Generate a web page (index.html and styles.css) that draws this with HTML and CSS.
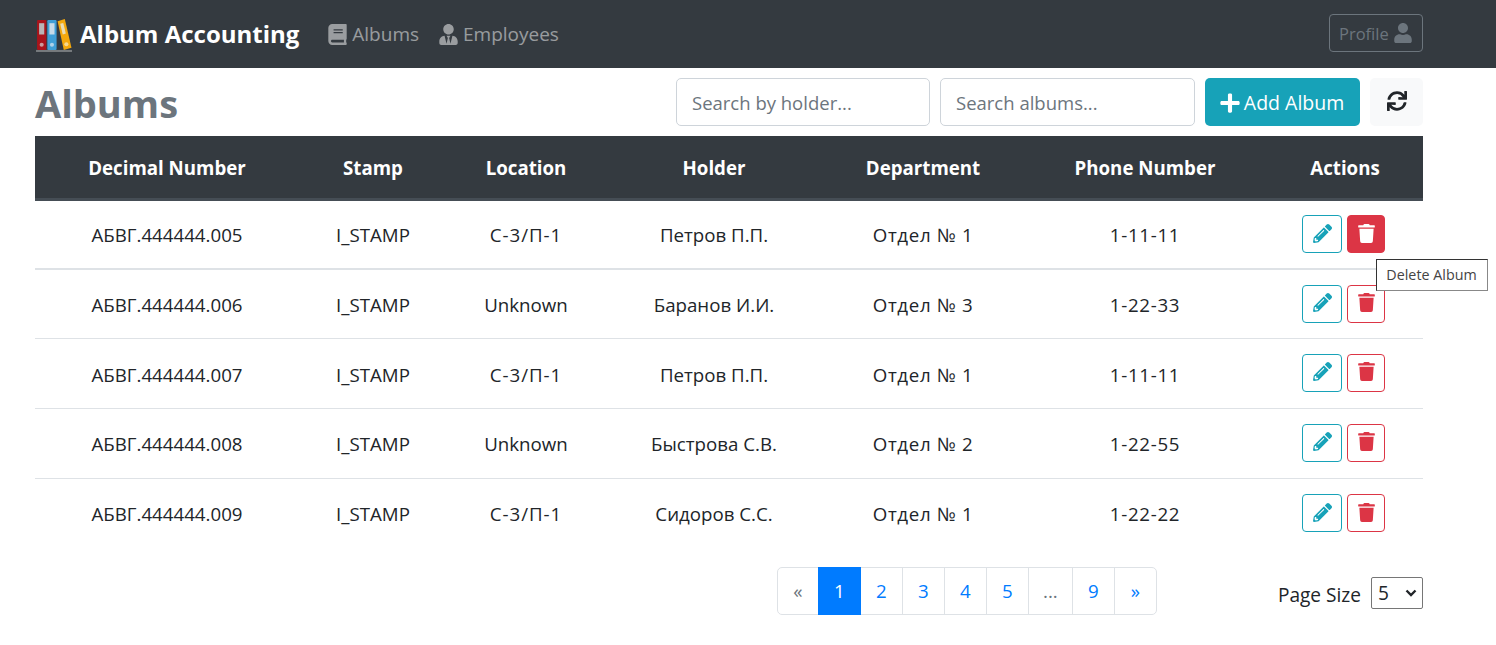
FILE: index.html
```html
<!DOCTYPE html>
<html lang="en">
<head>
    <meta charset="UTF-8" />
    <meta name="viewport" content="width=device-width, initial-scale=1" />
    <title>Album Accounting</title>
    <link rel="stylesheet" href="styles.css">
</head>
<body>
    <svg class="icon-defs" aria-hidden="true">
        <symbol id="i-book" viewBox="0 0 448 512"><path d="M448 360V24c0-13.3-10.7-24-24-24H96C43 0 0 43 0 96v320c0 53 43 96 96 96h328c13.3 0 24-10.7 24-24v-16c0-7.5-3.5-14.3-8.9-18.7-4.2-15.4-4.2-59.3 0-74.7 5.4-4.3 8.9-11.1 8.9-18.6zM128 134c0-3.3 2.7-6 6-6h212c3.3 0 6 2.7 6 6v20c0 3.3-2.7 6-6 6H134c-3.3 0-6-2.7-6-6v-20zm0 64c0-3.3 2.7-6 6-6h212c3.3 0 6 2.7 6 6v20c0 3.3-2.7 6-6 6H134c-3.3 0-6-2.7-6-6v-20zm253.4 250H96c-17.7 0-32-14.3-32-32 0-17.6 14.4-32 32-32h285.4c-1.9 17.1-1.9 46.9 0 64z"/></symbol>
        <symbol id="i-tie" viewBox="0 0 448 512"><path d="M224 256c70.7 0 128-57.3 128-128S294.7 0 224 0 96 57.3 96 128s57.3 128 128 128zm95.8 32.6L272 480l-32-136 32-56h-96l32 56-32 136-47.8-191.4C56.9 292 0 350.3 0 422.4V464c0 26.5 21.5 48 48 48h352c26.5 0 48-21.5 48-48v-41.6c0-72.1-56.9-130.4-128.2-133.8z"/></symbol>
        <symbol id="i-user" viewBox="0 0 448 512"><path d="M224 256c70.7 0 128-57.3 128-128S294.7 0 224 0 96 57.3 96 128s57.3 128 128 128zm89.6 32h-16.7c-22.2 10.2-46.9 16-72.9 16s-50.6-5.8-72.9-16h-16.7C60.2 288 0 348.2 0 422.4V464c0 26.5 21.5 48 48 48h352c26.5 0 48-21.5 48-48v-41.6c0-74.2-60.2-134.4-134.4-134.4z"/></symbol>
        <symbol id="i-plus" viewBox="0 0 448 512"><path d="M416 208H272V64c0-17.67-14.33-32-32-32h-32c-17.67 0-32 14.33-32 32v144H32c-17.67 0-32 14.33-32 32v32c0 17.67 14.33 32 32 32h144v144c0 17.67 14.33 32 32 32h32c17.67 0 32-14.33 32-32V304h144c17.67 0 32-14.33 32-32v-32c0-17.67-14.33-32-32-32z"/></symbol>
        <symbol id="i-sync" viewBox="0 0 512 512"><path d="M440.65 12.57l4 82.77A247.16 247.16 0 0 0 255.83 8C134.73 8 33.91 94.92 12.29 209.82A12 12 0 0 0 24.09 224h49.05a12 12 0 0 0 11.67-9.26 175.91 175.91 0 0 1 317-56.94l-101.46-4.86a12 12 0 0 0-12.57 12v47.41a12 12 0 0 0 12 12H500a12 12 0 0 0 12-12V12a12 12 0 0 0-12-12h-47.37a12 12 0 0 0-11.98 12.57zM255.83 432a175.61 175.61 0 0 1-146-77.8l101.8 4.87a12 12 0 0 0 12.57-12v-47.4a12 12 0 0 0-12-12H12a12 12 0 0 0-12 12V500a12 12 0 0 0 12 12h47.35a12 12 0 0 0 12-12.6l-4.15-82.57A247.17 247.17 0 0 0 255.83 504c121.11 0 221.93-86.92 243.55-201.82a12 12 0 0 0-11.8-14.18h-49.05a12 12 0 0 0-11.67 9.26A175.86 175.86 0 0 1 255.83 432z"/></symbol>
        <symbol id="i-pencil" viewBox="0 0 512 512"><path d="M497.9 142.1l-46.1 46.1c-4.7 4.7-12.3 4.7-17 0l-111-111c-4.7-4.7-4.7-12.3 0-17l46.1-46.1c18.7-18.7 49.1-18.7 67.9 0l60.1 60.1c18.8 18.7 18.8 49.1 0 67.9zM284.2 99.8L21.6 362.4.4 483.9c-2.9 16.4 11.4 30.6 27.8 27.8l121.5-21.3 262.6-262.6c4.7-4.7 4.7-12.3 0-17l-111-111c-4.8-4.7-12.4-4.7-17.1 0zM124.1 339.9c-5.5-5.5-5.5-14.3 0-19.8l154-154c5.5-5.5 14.3-5.5 19.8 0s5.5 14.3 0 19.8l-154 154c-5.5 5.5-14.3 5.5-19.8 0zM88 424h48v36.3l-64.5 11.3-31.1-31.1L51.7 376H88v48z"/></symbol>
        <symbol id="i-trash" viewBox="0 0 448 512"><path d="M432 32H312l-9.4-18.7A24 24 0 0 0 281.1 0H166.8a23.72 23.72 0 0 0-21.4 13.3L136 32H16A16 16 0 0 0 0 48v32a16 16 0 0 0 16 16h416a16 16 0 0 0 16-16V48a16 16 0 0 0-16-16zM53.2 467a48 48 0 0 0 47.9 45h245.8a48 48 0 0 0 47.9-45L416 128H32z"/></symbol>
    </svg>

    <nav class="navbar">
        <a class="brand" href="#">
            <svg class="brand-logo" viewBox="0 0 36 36" aria-hidden="true">
                <rect x="1" y="33" width="35" height="2" fill="#777b7e"/>
                <rect x="2" y="4" width="9" height="29" rx="1" fill="#a8141b"/>
                <rect x="4" y="7" width="5" height="11" fill="#b9b4b6"/>
                <circle cx="6.5" cy="28" r="2" fill="#c99a9c"/>
                <rect x="12" y="4" width="9" height="29" rx="1" fill="#3f9fd6"/>
                <rect x="14" y="7" width="5" height="11" fill="#c6dbe8"/>
                <circle cx="16.5" cy="28" r="2" fill="#aed2e8"/>
                <polygon points="22,5 29,3 35.5,31 28,33" fill="#f4a80d"/>
                <polygon points="24.5,7.5 27.5,6.7 30,17 27,18" fill="#eadcb4"/>
                <circle cx="30.5" cy="27.5" r="2" fill="#f7d88f"/>
            </svg>
            <span class="brand-text">Album Accounting</span>
        </a>
        <a class="nav-link" href="#"><svg class="icon"><use href="#i-book"/></svg> Albums</a>
        <a class="nav-link" href="#"><svg class="icon"><use href="#i-tie"/></svg> Employees</a>
        <button class="btn-profile" type="button" disabled>Profile <svg class="icon"><use href="#i-user"/></svg></button>
    </nav>

    <main class="container">
        <div class="toolbar">
            <h1>Albums</h1>
            <input class="search search-holder" type="text" placeholder="Search by holder..." />
            <input class="search search-albums" type="text" placeholder="Search albums..." />
            <button class="btn-add" type="button"><svg class="icon"><use href="#i-plus"/></svg> Add Album</button>
            <button class="btn-refresh" type="button"><svg class="icon"><use href="#i-sync"/></svg></button>
        </div>

        <table class="albums">
            <colgroup>
                <col class="c-number"><col class="c-stamp"><col class="c-location"><col class="c-holder"><col class="c-dept"><col class="c-phone"><col class="c-actions">
            </colgroup>
            <thead>
                <tr><th>Decimal Number</th><th>Stamp</th><th>Location</th><th>Holder</th><th>Department</th><th>Phone Number</th><th>Actions</th></tr>
            </thead>
            <tbody>
                <tr class="hovered">
                    <td>АБВГ.444444.005</td><td>I_STAMP</td><td class="room">С-3/П-1</td><td>Петров П.П.</td><td class="dept">Отдел № 1</td><td class="phone">1-11-11</td>
                    <td class="actions">
                        <button class="btn-icon edit" type="button"><svg class="icon"><use href="#i-pencil"/></svg></button>
                        <span class="delete-wrap">
                            <button class="btn-icon delete active" type="button"><svg class="icon"><use href="#i-trash"/></svg></button>
                            <span class="tooltip">Delete Album</span>
                        </span>
                    </td>
                </tr>
                <tr class="short nudged">
                    <td>АБВГ.444444.006</td><td>I_STAMP</td><td>Unknown</td><td>Баранов И.И.</td><td class="dept">Отдел № 3</td><td class="phone">1-22-33</td>
                    <td class="actions">
                        <button class="btn-icon edit" type="button"><svg class="icon"><use href="#i-pencil"/></svg></button>
                        <button class="btn-icon delete" type="button"><svg class="icon"><use href="#i-trash"/></svg></button>
                    </td>
                </tr>
                <tr class="nudged">
                    <td>АБВГ.444444.007</td><td>I_STAMP</td><td class="room">С-3/П-1</td><td>Петров П.П.</td><td class="dept">Отдел № 1</td><td class="phone">1-11-11</td>
                    <td class="actions">
                        <button class="btn-icon edit" type="button"><svg class="icon"><use href="#i-pencil"/></svg></button>
                        <button class="btn-icon delete" type="button"><svg class="icon"><use href="#i-trash"/></svg></button>
                    </td>
                </tr>
                <tr>
                    <td>АБВГ.444444.008</td><td>I_STAMP</td><td>Unknown</td><td>Быстрова С.В.</td><td class="dept">Отдел № 2</td><td class="phone">1-22-55</td>
                    <td class="actions">
                        <button class="btn-icon edit" type="button"><svg class="icon"><use href="#i-pencil"/></svg></button>
                        <button class="btn-icon delete" type="button"><svg class="icon"><use href="#i-trash"/></svg></button>
                    </td>
                </tr>
                <tr>
                    <td>АБВГ.444444.009</td><td>I_STAMP</td><td class="room">С-3/П-1</td><td>Сидоров С.С.</td><td class="dept">Отдел № 1</td><td class="phone">1-22-22</td>
                    <td class="actions">
                        <button class="btn-icon edit" type="button"><svg class="icon"><use href="#i-pencil"/></svg></button>
                        <button class="btn-icon delete" type="button"><svg class="icon"><use href="#i-trash"/></svg></button>
                    </td>
                </tr>
            </tbody>
        </table>

        <div class="table-footer">
            <ul class="pagination">
                <li class="page muted first">«</li>
                <li class="page current">1</li>
                <li class="page after-current">2</li>
                <li class="page">3</li>
                <li class="page">4</li>
                <li class="page">5</li>
                <li class="page muted dots">...</li>
                <li class="page">9</li>
                <li class="page">»</li>
            </ul>
            <label class="page-size"><span class="page-size-text">Page Size</span>
                <select>
                    <option>5</option>
                    <option>10</option>
                    <option>25</option>
                </select>
            </label>
        </div>
    </main>
</body>
</html>
```

FILE: styles.css
```css
* {
    box-sizing: border-box;
}
body {
    margin: 0;
    font-family: "Open Sans", "Noto Sans", sans-serif;
    font-size: 18.7px;
    color: #212529;
    background: #fff;
}
.icon-defs {
    display: none;
}
.icon {
    width: 1em;
    height: 1em;
    fill: currentColor;
    vertical-align: -0.125em;
}

/* top bar */
.navbar {
    display: flex;
    align-items: center;
    height: 68px;
    padding: 0 73px 0 35px;
    background: #343a40;
}
.brand {
    display: flex;
    align-items: center;
    gap: 8px;
    margin-right: 28px;
    color: #fff;
    font-size: 24px;
    font-weight: 700;
    text-decoration: none;
}
.brand-text {
    padding-bottom: 2px;
}
.brand-logo {
    width: 37px;
    height: 37px;
}
.nav-link {
    margin-right: 19px;
    font-size: 19px;
    color: rgba(255, 255, 255, 0.5);
    text-decoration: none;
}
.nav-link .icon {
    margin-right: -1px;
    font-size: 21px;
    vertical-align: -4px;
}
.btn-profile {
    margin: 0 0 2px auto;
    width: 94px;
    height: 38px;
    padding: 0;
    font: inherit;
    font-size: 16.5px;
    color: #6c757d;
    background: transparent;
    border: 1px solid #6c757d;
    border-radius: 4px;
}
.btn-profile .icon {
    font-size: 20px;
    vertical-align: -3px;
}

/* heading row */
.container {
    padding: 0 73px 0 35px;
}
.toolbar {
    display: flex;
    align-items: center;
    height: 68px;
    gap: 10px;
}
h1 {
    margin: 0 auto 0 0;
    padding-top: 2px;
    font-size: 38px;
    font-weight: 700;
    color: #6c757d;
}
.search {
    height: 48px;
    padding: 0 15px;
    font: inherit;
    font-size: 18.5px;
    color: #495057;
    background: #fff;
    border: 1px solid #ced4da;
    border-radius: 5px;
}
.search::placeholder {
    color: #6c757d;
}
.search-holder {
    width: 254px;
}
.search-albums {
    width: 255px;
}
.btn-add {
    width: 155px;
    height: 48px;
    padding: 0 2px 0 0;
    font: inherit;
    font-size: 19.5px;
    color: #fff;
    background: #17a2b8;
    border: 0;
    border-radius: 5px;
}
.btn-add .icon {
    margin-right: -2px;
    font-size: 22px;
    vertical-align: -4px;
}
.btn-refresh {
    width: 53px;
    height: 48px;
    font-size: 20px;
    color: #212529;
    background: #f8f9fa;
    border: 0;
    border-radius: 5px;
}

/* table */
.albums {
    width: 100%;
    table-layout: fixed;
    border-collapse: collapse;
}
.c-number { width: 264px; }
.c-stamp { width: 148px; }
.c-location { width: 158px; }
.c-holder { width: 218px; }
.c-dept { width: 200px; }
.c-phone { width: 244px; }
.albums th {
    height: 63px;
    padding: 2px 0 0;
    color: #fff;
    font-weight: 700;
    text-align: center;
    background: #343a40;
    border-bottom: 3px solid #454d55;
}
.albums td {
    height: 70px;
    padding: 0;
    text-align: center;
    border-bottom: 1px solid #dee2e6;
}
.albums tr.hovered td {
    border-bottom-width: 2px;
}
.albums tr.short td {
    height: 69px;
}
.albums tr.nudged td {
    padding-top: 2px;
}
.albums tbody tr:last-child td {
    border-bottom: 0;
}
.albums td.room {
    letter-spacing: 1px;
}
.albums td.dept {
    letter-spacing: 0.65px;
}
.albums td.phone {
    letter-spacing: 0.7px;
}
.albums td.actions,
.albums tr.nudged td.actions {
    padding: 0 4px 0 0;
    font-size: 0;
}
.btn-icon {
    width: 40px;
    height: 38px;
    margin-right: 5px;
    padding: 0 0 0 2px;
    font-size: 19px;
    background: #fff;
    border-radius: 4px;
    border: 1px solid;
}
.edit {
    color: #17a2b8;
    border-color: #17a2b8;
}
.delete {
    width: 38px;
    margin-right: 0;
    color: #dc3545;
    border-color: #dc3545;
}
.delete.active {
    color: #fff;
    background: #dc3545;
}
.delete-wrap {
    position: relative;
    display: inline-block;
}
.tooltip {
    position: absolute;
    top: 44px;
    left: 29px;
    width: 112px;
    height: 32px;
    font-size: 14.3px;
    line-height: 30px;
    color: #444;
    background: #fff;
    border: 1px solid #888;
    border-top-color: #333;
    border-left-color: #333;
    white-space: nowrap;
}

/* pager */
.table-footer {
    display: flex;
    align-items: center;
    justify-content: flex-end;
    margin-top: 19px;
}
.pagination {
    display: flex;
    margin: 0 121px 0 0;
    padding: 0;
    list-style: none;
    border: 1px solid #dee2e6;
    border-radius: 5px;
}
.page {
    width: 42px;
    height: 46px;
    line-height: 46px;
    text-align: center;
    color: #007bff;
    border-left: 1px solid #dee2e6;
}
.page.first {
    width: 40px;
    border-left: 0;
}
.page.current {
    width: 43px;
    height: 48px;
    margin: -1px 0;
    line-height: 48px;
    color: #fff;
    background: #007bff;
    border-left: 0;
}
.page.after-current {
    width: 41px;
    border-left: 0;
}
.page.dots {
    width: 44px;
}
.page.muted {
    color: #6c757d;
}
.page-size {
    display: flex;
    align-items: center;
    gap: 10px;
    margin-top: 4px;
    font-size: 19.1px;
}
.page-size-text {
    padding-top: 4px;
}
.page-size select {
    width: 52px;
    height: 32px;
    padding: 0 0 0 6px;
    font: inherit;
    color: #212529;
    background: #fff url("data:image/svg+xml,%3Csvg xmlns='http://www.w3.org/2000/svg' viewBox='0 0 12 8'%3E%3Cpath d='M1.5 1.5 6 6l4.5-4.5' fill='none' stroke='%23212529' stroke-width='2.4'/%3E%3C/svg%3E") no-repeat right 5px center / 12px 8px;
    border: 1px solid #767676;
    border-radius: 2px;
    appearance: none;
}
```
